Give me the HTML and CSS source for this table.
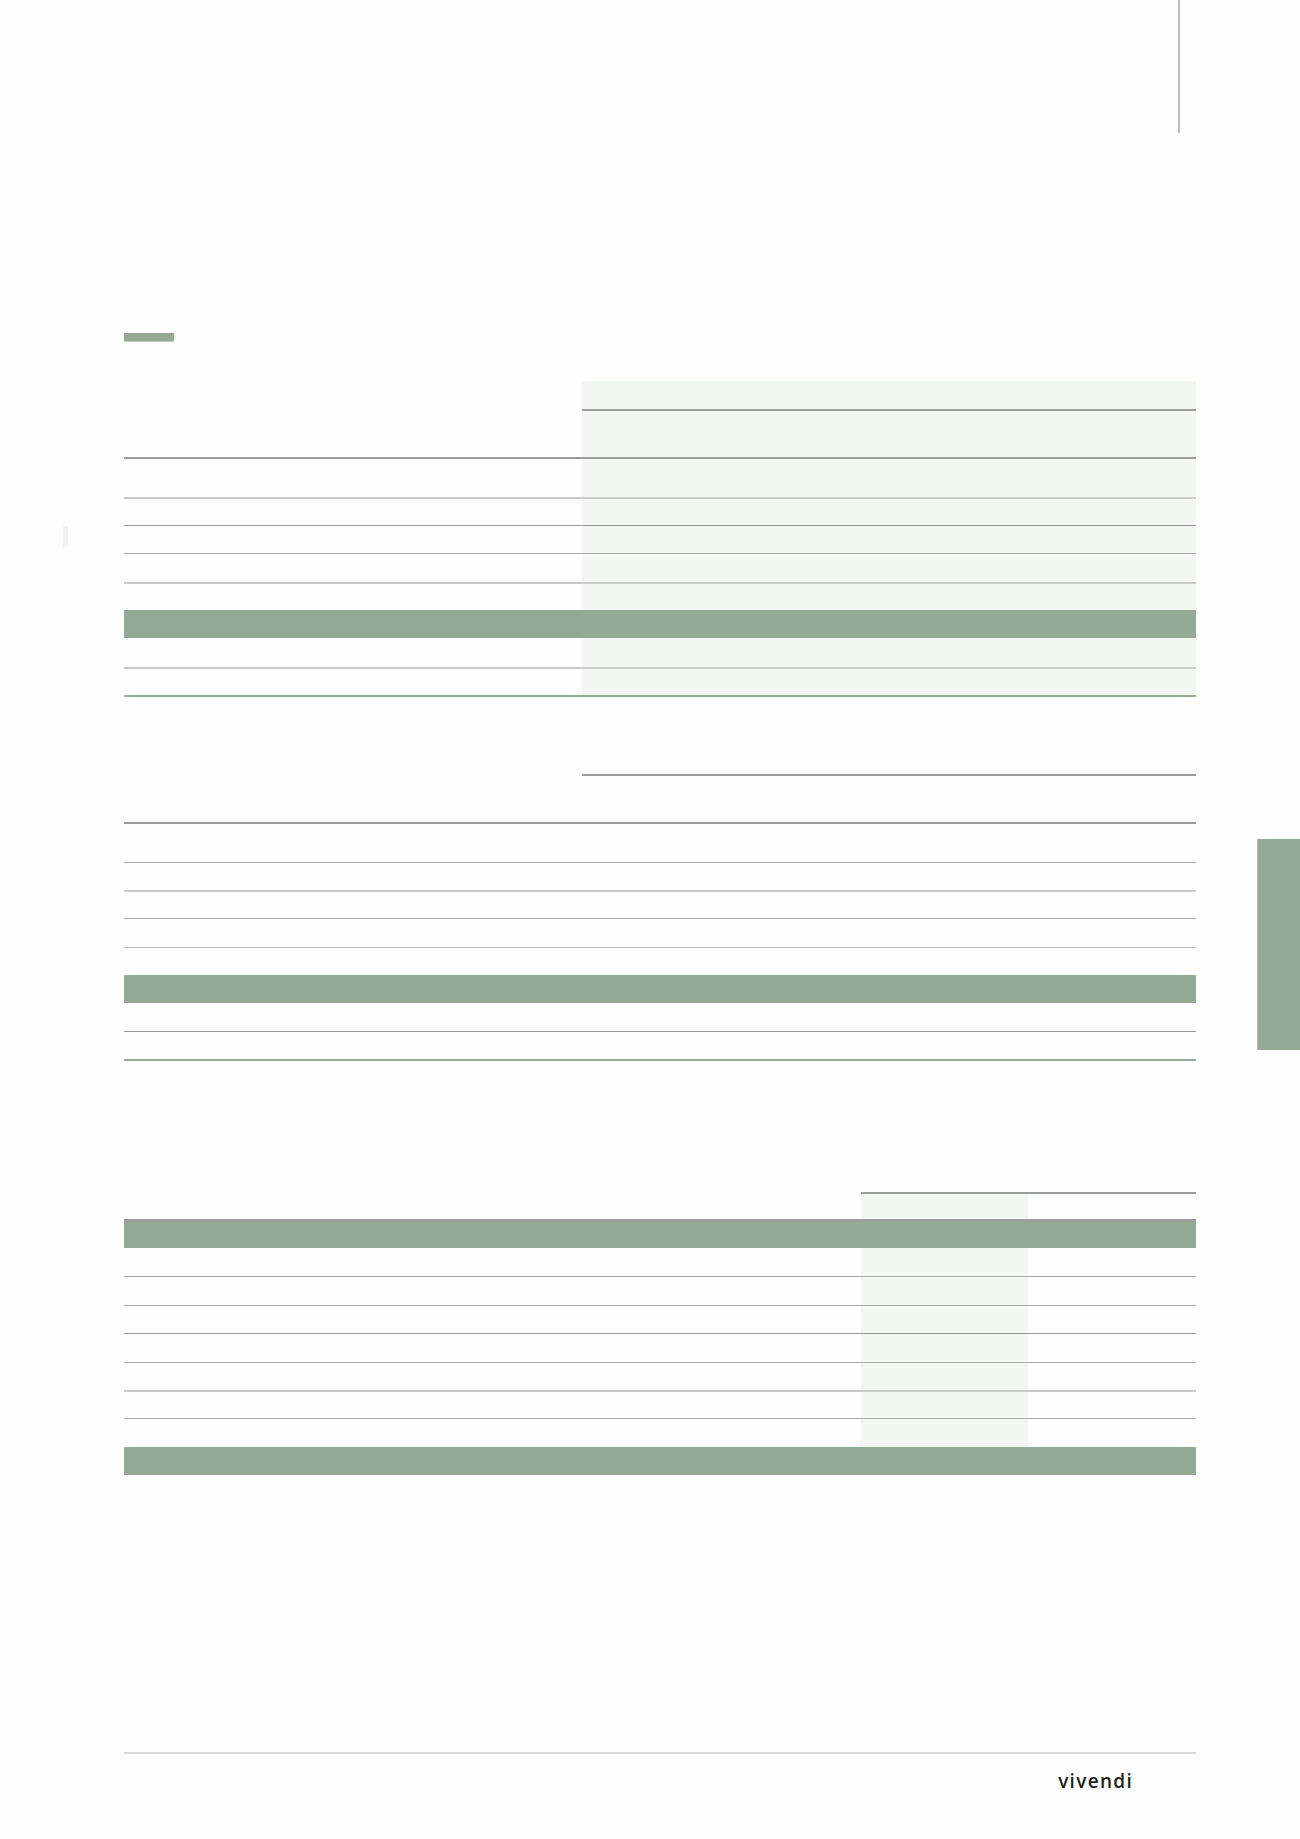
FILE: index.html
```html
<!DOCTYPE html>
<html lang="fr">
<head>
<meta charset="utf-8">
<title>Vivendi</title>
<link rel="stylesheet" href="styles.css">
</head>
<body>
<div class="page">
  <aside class="gutter-left"><div class="mark"></div></aside>
  <main class="main">
    <div class="head"><div class="head-rule"></div></div>
    <div class="title-bar"></div>

    <section class="table t4 tint">
      <div class="row hdr1"><div class="c"></div><div class="c g b2d"></div><div class="c g b2d"></div><div class="c g b2d"></div></div>
      <div class="row hdr2"><div class="c b2d"></div><div class="c g b2d"></div><div class="c g b2d"></div><div class="c g b2d"></div></div>
      <div class="row h40"><div class="c b2l"></div><div class="c g b2l"></div><div class="c g b2l"></div><div class="c g b2l"></div></div>
      <div class="row h27"><div class="c b1d"></div><div class="c g b1d"></div><div class="c g b1d"></div><div class="c g b1d"></div></div>
      <div class="row h28"><div class="c b1m"></div><div class="c g b1m"></div><div class="c g b1m"></div><div class="c g b1m"></div></div>
      <div class="row h30"><div class="c b2l"></div><div class="c g b2l"></div><div class="c g b2l"></div><div class="c g b2l"></div></div>
      <div class="row h26"><div class="c"></div><div class="c g"></div><div class="c g"></div><div class="c g"></div></div>
      <div class="row band h28"></div>
      <div class="row h31"><div class="c b2l"></div><div class="c g b2l"></div><div class="c g b2l"></div><div class="c g b2l"></div></div>
      <div class="row h28"><div class="c b2g"></div><div class="c g b2g"></div><div class="c g b2g"></div><div class="c g b2g"></div></div>
    </section>

    <section class="table t4 second">
      <div class="row hdr1"><div class="c"></div><div class="c b2d"></div><div class="c b2d"></div><div class="c b2d"></div></div>
      <div class="row hdr2"><div class="c b2d"></div><div class="c b2d"></div><div class="c b2d"></div><div class="c b2d"></div></div>
      <div class="row h39"><div class="c b1m"></div><div class="c b1m"></div><div class="c b1m"></div><div class="c b1m"></div></div>
      <div class="row h29"><div class="c b2l"></div><div class="c b2l"></div><div class="c b2l"></div><div class="c b2l"></div></div>
      <div class="row h27"><div class="c b1m"></div><div class="c b1m"></div><div class="c b1m"></div><div class="c b1m"></div></div>
      <div class="row h29"><div class="c b1l"></div><div class="c b1l"></div><div class="c b1l"></div><div class="c b1l"></div></div>
      <div class="row h27"><div class="c"></div><div class="c"></div><div class="c"></div><div class="c"></div></div>
      <div class="row band h28"></div>
      <div class="row h29"><div class="c b1d"></div><div class="c b1d"></div><div class="c b1d"></div><div class="c b1d"></div></div>
      <div class="row h29"><div class="c b2g"></div><div class="c b2g"></div><div class="c b2g"></div><div class="c b2g"></div></div>
    </section>

    <section class="table t3 third">
      <div class="row h28"><div class="c"></div><div class="c b2d"></div><div class="c b2d"></div></div>
      <div class="row h27"><div class="c b2d"></div><div class="c g b2d"></div><div class="c b2d"></div></div>
      <div class="row band h27"></div>
      <div class="row h29"><div class="c b1m"></div><div class="c g b1m"></div><div class="c b1m"></div></div>
      <div class="row h29"><div class="c b1m"></div><div class="c g b1m"></div><div class="c b1m"></div></div>
      <div class="row h28"><div class="c b1d"></div><div class="c g b1d"></div><div class="c b1d"></div></div>
      <div class="row h29"><div class="c b1m"></div><div class="c g b1m"></div><div class="c b1m"></div></div>
      <div class="row h29"><div class="c b2l"></div><div class="c g b2l"></div><div class="c b2l"></div></div>
      <div class="row h27"><div class="c b1m"></div><div class="c g b1m"></div><div class="c b1m"></div></div>
      <div class="row h28"><div class="c"></div><div class="c g"></div><div class="c"></div></div>
      <div class="row band h28"></div>
    </section>

    <footer class="foot">
      <div class="foot-rule"></div>
      <div class="logo">vivendi</div>
    </footer>
  </main>
  <aside class="gutter-right"><div class="tab"></div></aside>
</div>
</body>
</html>
```

FILE: styles.css
```css
html, body {
  margin: 0;
  padding: 0;
  background: #fefefe;
}

.page {
  width: 1300px;
  height: 1839px;
  overflow: hidden;
  display: flex;
  font-family: "Open Sans", "Liberation Sans", sans-serif;
}

.gutter-left {
  width: 124px;
  flex: none;
}

.mark {
  margin: 526px 0 0 63px;
  width: 5px;
  height: 21px;
  background: #f1f5ef;
}

.main {
  width: 1072px;
  flex: none;
  display: flex;
  flex-direction: column;
}

.gutter-right {
  width: 104px;
  flex: none;
}

.tab {
  margin: 839px 0 0 61px;
  width: 43px;
  height: 211px;
  background: #93ab94;
  box-sizing: border-box;
  border-left: 1px solid #b3c4b4;
}

.head {
  height: 133px;
}

.head-rule {
  margin-left: 1054px;
  width: 2px;
  height: 133px;
  background: #bdbdbd;
}

.title-bar {
  margin-top: 200px;
  width: 50px;
  height: 8px;
  background: #93ab94;
  border-bottom: 1px solid #bccbbd;
}

.table {
  display: flex;
  flex-direction: column;
}

.tint { margin-top: 39px; }
.second { margin-top: 49px; }
.third { margin-top: 105px; }

.row {
  display: grid;
}

.t4 .row { grid-template-columns: 458px 204px 205px 205px; }
.t3 .row { grid-template-columns: 737px 167px 168px; }

.c {
  box-sizing: border-box;
}

.g { background: #f3f7f1; }

.band { background: #93ab94; }

.hdr1 { height: 30px; }
.hdr2 { height: 48px; }
.h26 { height: 26px; }
.h27 { height: 27px; }
.h28 { height: 28px; }
.h29 { height: 29px; }
.h30 { height: 30px; }
.h31 { height: 31px; }
.h39 { height: 39px; }
.h40 { height: 40px; }

.b2d { border-bottom: 2px solid #9b9d9c; }
.b2l { border-bottom: 2px solid #cacaca; }
.b1d { border-bottom: 1px solid #979797; }
.b1m { border-bottom: 1px solid #a9a9a9; }
.b1l { border-bottom: 1px solid #b9b9b9; }
.b2g { border-bottom: 2px solid #93ab94; }

.foot {
  margin-top: 277px;
  display: flex;
  flex-direction: column;
}

.foot-rule {
  height: 2px;
  background: #dadada;
}

.logo {
  margin-top: 18px;
  align-self: flex-end;
  margin-right: 63px;
  font-family: "Open Sans", "Liberation Sans", sans-serif;
  font-weight: 600;
  font-size: 19px;
  line-height: 19px;
  letter-spacing: 1.3px;
  color: #221f1c;
}
```
